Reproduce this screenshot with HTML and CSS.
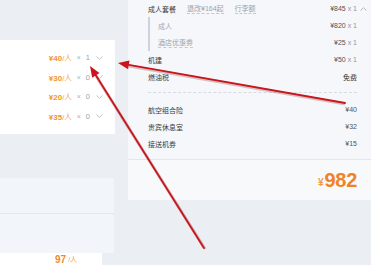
FILE: index.html
```html
<!DOCTYPE html>
<html lang="zh-CN">
<head>
<meta charset="utf-8">
<title>订单明细</title>
<link rel="stylesheet" href="styles.css">
</head>
<body>
<div class="page">
  <div class="left">
    <div class="card">
      <div class="opt"><span class="price"><b>¥40</b>/人</span><span class="times">×</span><span class="qty">1</span><svg class="chev" width="7" height="4" viewBox="0 0 7 4"><path d="M0.5 0.5 L3.5 3.3 L6.5 0.5" fill="none" stroke="#b5bcc6" stroke-width="0.9"/></svg></div>
      <div class="opt"><span class="price"><b>¥30</b>/人</span><span class="times">×</span><span class="qty">0</span><svg class="chev" width="7" height="4" viewBox="0 0 7 4"><path d="M0.5 0.5 L3.5 3.3 L6.5 0.5" fill="none" stroke="#b5bcc6" stroke-width="0.9"/></svg></div>
      <div class="opt"><span class="price"><b>¥20</b>/人</span><span class="times">×</span><span class="qty">0</span><svg class="chev" width="7" height="4" viewBox="0 0 7 4"><path d="M0.5 0.5 L3.5 3.3 L6.5 0.5" fill="none" stroke="#b5bcc6" stroke-width="0.9"/></svg></div>
      <div class="opt"><span class="price"><b>¥35</b>/人</span><span class="times">×</span><span class="qty">0</span><svg class="chev" width="7" height="4" viewBox="0 0 7 4"><path d="M0.5 0.5 L3.5 3.3 L6.5 0.5" fill="none" stroke="#b5bcc6" stroke-width="0.9"/></svg></div>
    </div>
    <div class="block"><div class="block-top"></div></div>
    <div class="bottom-card"><span class="bprice">97</span><span class="bunit">/人</span></div>
  </div>
  <aside class="panel">
    <div class="items">
      <div class="row">
        <span class="label">成人套餐<span class="link">退改¥164起</span><span class="link">行李额</span></span>
        <span class="val">¥845 <span class="mul">x 1</span><svg class="caret" width="7" height="4" viewBox="0 0 7 4"><path d="M0.5 3.5 L3.5 0.7 L6.5 3.5" fill="none" stroke="#aab2bd" stroke-width="0.9"/></svg></span>
      </div>
      <div class="sub">
        <div class="row"><span class="sublabel">成人</span><span class="val">¥820 <span class="mul">x 1</span></span></div>
        <div class="row"><span class="sublink">酒店优惠券</span><span class="val">¥25 <span class="mul">x 1</span></span></div>
      </div>
      <div class="row"><span class="label">机建</span><span class="val">¥50 <span class="mul">x 1</span></span></div>
      <div class="row"><span class="label">燃油税</span><span class="val dark">免费</span></div>
      <div class="dash"></div>
      <div class="row"><span class="label">航空组合险</span><span class="val">¥40</span></div>
      <div class="row"><span class="label">贵宾休息室</span><span class="val">¥32</span></div>
      <div class="row"><span class="label">接送机券</span><span class="val">¥15</span></div>
    </div>
    <div class="total"><span class="yen">¥</span><span class="sum">982</span></div>
  </aside>
</div>
<svg class="arrows" width="371" height="265" viewBox="0 0 371 265">
  <g stroke="#7a1a1a" stroke-opacity="0.25" stroke-width="3.2" fill="none">
    <line x1="345" y1="104" x2="129" y2="66"/>
    <line x1="205" y1="249" x2="96" y2="76"/>
  </g>
  <g stroke="#c9151c" stroke-width="1.8" fill="none" stroke-linecap="round">
    <line x1="345" y1="103" x2="128.8" y2="64.9"/>
    <line x1="204" y1="248" x2="95.8" y2="75.3"/>
  </g>
  <polygon points="118,63 129.5,60.6 128.1,69.2" fill="#c9151c"/>
  <polygon points="90,66 99.4,72.9 92.2,77.7" fill="#c9151c"/>
</svg>
</body>
</html>
```
FILE: styles.css
```css
* { box-sizing: border-box; }
html, body { margin: 0; padding: 0; }
body {
  width: 371px;
  height: 265px;
  overflow: hidden;
  background: #ebeef2;
  font-family: "Liberation Sans", "Noto Sans CJK SC", sans-serif;
  font-size: 7px;
  color: #333;
  position: relative;
}
.page {
  display: flex;
  align-items: flex-start;
}
.left {
  width: 115px;
  display: flex;
  flex-direction: column;
}
.card {
  margin-top: 40px;
  background: #fff;
  padding: 8px 12px 8px 0;
  display: flex;
  flex-direction: column;
}
.opt {
  height: 19.5px;
  display: flex;
  align-items: center;
  justify-content: flex-end;
  color: #aab0b8;
}
.price {
  color: #f4a24e;
  font-size: 7.5px;
}
.price b {
  font-weight: bold;
  color: #f39433;
  font-size: 8px;
}
.times { margin-left: 5px; font-size: 7px; }
.qty { margin-left: 5px; font-size: 7.5px; color: #9aa1aa; }
.chev { margin-left: 6px; }
.block {
  margin-top: 44px;
  height: 75px;
  width: 114px;
  background: #f2f5f9;
}
.block-top {
  height: 36px;
  border-bottom: 1px solid #e4e8ed;
}
.bottom-card {
  width: 102px;
  height: 12px;
  background: #fff;
  padding: 2px 0 0 55px;
  display: flex;
  align-items: flex-start;
}
.bprice {
  color: #f08a2c;
  font-weight: bold;
  font-size: 10px;
  line-height: 10px;
}
.bunit {
  color: #f4a24e;
  font-size: 7px;
  margin-left: 2px;
  line-height: 10px;
}
.panel {
  margin-left: 13px;
  flex: 1;
  height: 200px;
  background: #f5f7fa;
  display: flex;
  flex-direction: column;
}
.items {
  padding: 0 14px 7px 20px;
  border-bottom: 1px solid #e3e7ec;
}
.row {
  height: 17px;
  display: flex;
  align-items: center;
  justify-content: space-between;
}
.label { color: #3a3a3a; display: flex; align-items: center; }
.link {
  margin-left: 11px;
  color: #9aa3ae;
  border-bottom: 1px dashed #c3c9d1;
  line-height: 9px;
}
.sub {
  border-left: 2px solid #ccd3dc;
  padding-left: 8px;
}
.sublabel { color: #a3aab3; }
.sublink {
  color: #9aa3ae;
  border-bottom: 1px dashed #c3c9d1;
  line-height: 9px;
}
.val {
  color: #555;
  display: flex;
  align-items: center;
  white-space: pre;
}
.val.dark { color: #333; }
.mul { color: #8e959e; }
.caret { margin-left: 3px; margin-right: -10px; }
.dash {
  margin: 7px 0 8px;
  border-top: 1px dashed #d7dce2;
}
.total {
  flex: 1;
  background: #f8f9fb;
  display: flex;
  align-items: center;
  justify-content: flex-end;
  padding-right: 14px;
  color: #f0832a;
}
.yen {
  font-size: 10px;
  font-weight: bold;
  margin-top: 5px;
  margin-right: 1px;
  color: #f3994a;
}
.sum {
  font-size: 20px;
  font-weight: bold;
  letter-spacing: -0.3px;
}
.arrows {
  position: absolute;
  left: 0;
  top: 0;
  pointer-events: none;
}
```
